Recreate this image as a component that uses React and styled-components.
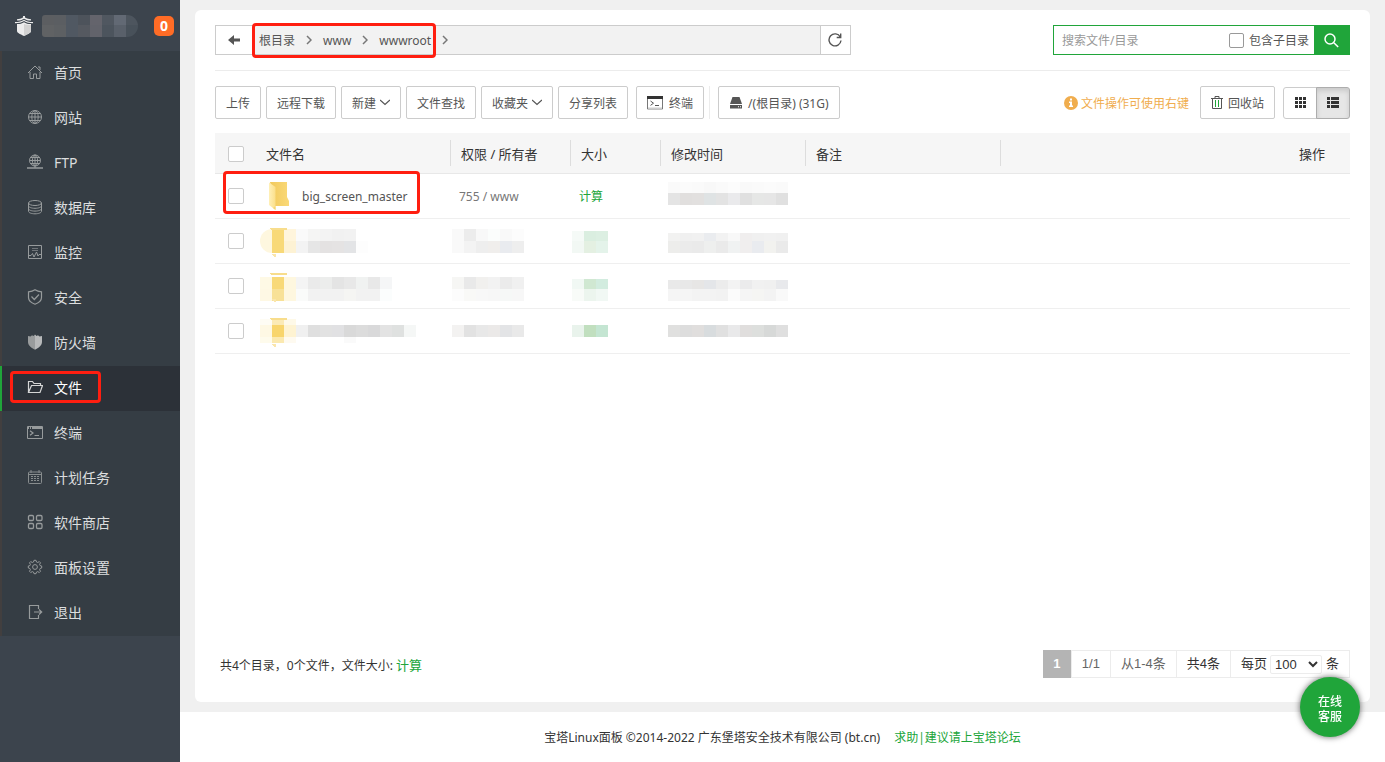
import React from "react";
import styled, { createGlobalStyle } from "styled-components";

const GlobalStyle = createGlobalStyle`
  * {
    box-sizing: border-box;
  }

  body {
    margin: 0;
    background: #fff;
    color: #333;
    font-family: "Noto Sans", "Noto Sans CJK SC", sans-serif;
    font-size: 12px;
  }

  button,
  input,
  select {
    font: inherit;
    color: inherit;
  }

  a {
    color: inherit;
    text-decoration: none;
  }

  svg {
    display: block;
    flex: none;
  }
`;

const Page = styled.div`
  display: flex;
  min-height: 100vh;
`;

const Sidebar = styled.aside`
  width: 180px;
  flex: none;
  background: #3c444d;
`;

const SidebarTop = styled.div`
  display: flex;
  align-items: center;
  height: 51px;
  padding: 0 6px 0 15px;
`;

const ServerName = styled.div`
  margin: 0 auto 0 9px;
  border-radius: 3px 11px 11px 3px;
  overflow: hidden;
`;

const Badge = styled.span`
  width: 20px;
  height: 20px;
  border-radius: 5px;
  background: #ff6c26;
  color: #fff;
  font-size: 14px;
  font-weight: bold;
  line-height: 20px;
  text-align: center;
`;

const Menu = styled.nav`
  display: flex;
  flex-direction: column;
  background: #353d44;
`;

const MenuLink = styled.a`
  position: relative;
  display: flex;
  align-items: center;
  gap: 11px;
  height: 45px;
  padding: 0 0 3px 25px;
  border-left: 2px solid ${({ $active }) => ($active ? "#20a53a" : "#423f3f")};
  background: ${({ $active }) => ($active ? "#2c3138" : "transparent")};
  color: ${({ $active }) => ($active ? "#fff" : "#dcdedf")};
  font-size: 14px;

  svg {
    color: ${({ $active }) => ($active ? "#d5d5d5" : "#979b9c")};
  }
`;

const Highlight = styled.span`
  position: absolute;
  border: 3px solid #ff1e10;
  border-radius: 4px;
  pointer-events: none;
`;

const MenuHighlight = styled(Highlight)`
  inset: 5px 79px 8px 8px;
`;

const PathHighlight = styled(Highlight)`
  inset: -3px -5px -4px -7px;
`;

const RowHighlight = styled(Highlight)`
  left: 8px;
  top: -3px;
  width: 197px;
  height: 43px;
`;

const Main = styled.main`
  display: flex;
  flex: 1;
  flex-direction: column;
  min-width: 0;
`;

const Content = styled.div`
  display: flex;
  flex: 1;
  padding: 10px 15px;
  background: #f0f0f0;
`;

const Card = styled.section`
  display: flex;
  flex: 1;
  flex-direction: column;
  min-width: 0;
  padding: 15px 20px 24px;
  border-radius: 6px;
  background: #fff;
`;

const TopBar = styled.div`
  display: flex;
  justify-content: space-between;
  padding-bottom: 15px;
  border-bottom: 1px solid #ececec;
`;

const PathBar = styled.div`
  display: flex;
  width: 56%;
  height: 30px;
  border: 1px solid #ccc;
  background: #f2f2f2;
`;

const PathButton = styled.button`
  display: flex;
  align-items: center;
  justify-content: center;
  width: ${({ $width }) => $width}px;
  padding: 0;
  border: 0;
  background: #fff;
  color: #555;
  cursor: pointer;
`;

const RefreshButton = styled(PathButton)`
  margin-left: auto;
  border-left: 1px solid #ccc;
`;

const Crumbs = styled.div`
  position: relative;
  display: flex;
  align-items: center;
  gap: 11px;
  margin: 0 11px 0 7px;
  color: #555;

  svg {
    color: #777;
  }
`;

const TrailChevron = styled.span`
  display: flex;
  align-items: center;
  color: #777;
`;

const Search = styled.form`
  display: flex;
  width: 297px;
  height: 30px;
  border: 1px solid #20a53a;
`;

const SearchInput = styled.input`
  flex: 1;
  min-width: 0;
  padding: 0 8px;
  border: 0;
  outline: none;

  &::placeholder {
    color: #999;
  }
`;

const CheckLabel = styled.label`
  display: flex;
  align-items: center;
  gap: 5px;
  margin-right: 5px;
  color: #555;
`;

const Checkbox = styled.input.attrs({ type: "checkbox" })`
  appearance: none;
  display: block;
  width: ${({ $size }) => $size || 16}px;
  height: ${({ $size }) => $size || 16}px;
  margin: 0;
  border: 1px solid ${({ $dark }) => ($dark ? "#999" : "#ccc")};
  border-radius: 2px;
  background: #fff;
`;

const SearchButton = styled.button`
  display: flex;
  align-items: center;
  justify-content: center;
  width: 35px;
  padding: 0;
  border: 0;
  background: #20a53a;
  color: #fff;
`;

const Toolbar = styled.div`
  display: flex;
  align-items: center;
  gap: 5px;
  padding: 15px 0 14px;
`;

const ToolButton = styled.button`
  display: flex;
  align-items: center;
  gap: ${({ $gap }) => $gap || 4}px;
  height: 33px;
  padding: 0 10px;
  border: 1px solid #ccc;
  border-radius: 2px;
  background: #fff;
  color: #555;
  white-space: nowrap;
  cursor: pointer;
`;

const ToolGroup = styled.div`
  display: flex;
  padding-left: ${({ $line }) => ($line ? 8 : 3)}px;
  border-left: ${({ $line }) => ($line ? "1px solid #ececec" : "0")};
`;

const Tip = styled.span`
  display: flex;
  align-items: center;
  gap: 3px;
  margin: 0 6px 0 auto;
  color: #f0ad4e;
`;

const ViewToggle = styled.div`
  display: flex;
  margin-left: 3px;
`;

const ViewButton = styled.button`
  display: flex;
  align-items: center;
  justify-content: center;
  width: 34px;
  height: 32px;
  padding: 0;
  border: 1px solid ${({ $active }) => ($active ? "#adadad" : "#ccc")};
  border-radius: ${({ $active }) => ($active ? "0 3px 3px 0" : "3px 0 0 3px")};
  background: ${({ $active }) => ($active ? "#e6e6e6" : "#fff")};
  box-shadow: ${({ $active }) => ($active ? "inset 0 3px 5px rgba(0, 0, 0, 0.125)" : "none")};
  color: #333;

  & + & {
    margin-left: -1px;
  }
`;

const Table = styled.table`
  width: 100%;
  table-layout: fixed;
  border-collapse: separate;
  border-spacing: 0;
`;

const HeadCell = styled.th`
  height: 41px;
  padding: 1px 10px 0;
  border-bottom: 1px solid #e8e8e8;
  background: ${({ $line }) =>
      $line ? "linear-gradient(#ddd, #ddd) right center / 1px 26px no-repeat," : ""}
    #f6f6f6;
  font-size: 13px;
  font-weight: normal;
  text-align: ${({ $right }) => ($right ? "right" : "left")};

  &:last-child {
    padding-right: 25px;
  }
`;

const CheckCell = styled(HeadCell)`
  padding: 2px 0 0 13px;
`;

const Row = styled.tr`
  position: relative;

  td {
    height: 45px;
    padding: 0 0 0 8px;
    border-bottom: 1px solid #efefef;
    color: #777;
  }

  td:first-child {
    padding-left: 13px;
  }

  td:nth-child(2) {
    padding-left: 4px;
  }

  td:nth-child(5) {
    padding-left: 7px;
  }
`;

const FileName = styled.a`
  display: flex;
  align-items: center;
  gap: 12px;
  padding-left: 8px;
  color: #555;
`;

const GreenLink = styled.a`
  color: #20a53a;
  font-size: ${({ $large }) => ($large ? 13 : 12)}px;
`;

const Blur = styled.svg`
  margin-left: ${({ $bleed }) => ($bleed ? -7 : 0)}px;
`;

const CardFooter = styled.div`
  display: flex;
  align-items: center;
  justify-content: space-between;
  margin-top: auto;
  padding-left: 5px;
`;

const Pager = styled.div`
  display: flex;
  height: 28px;
  border: 1px solid #ececec;
  font-family: "Liberation Sans", "Noto Sans CJK SC", sans-serif;
  font-size: 13px;
  line-height: 26px;
`;

const PageItem = styled.span`
  display: flex;
  align-items: center;
  gap: 4px;
  padding: 0 10px;
  border-left: 1px solid #ececec;
  color: ${({ $muted }) => ($muted ? "#666" : "#333")};
`;

const CurrentPage = styled.span`
  width: 28px;
  margin: -1px 0 -1px -1px;
  background: #b4b4b4;
  color: #fff;
  font-weight: bold;
  line-height: 28px;
  text-align: center;
`;

const PageSize = styled.select`
  width: 52px;
  height: 19px;
  padding: 0;
  border: 1px solid #ececec;
  border-radius: 2px;
  background: #fff;
`;

const SizeLabel = styled.label`
  display: flex;
  align-items: center;
  gap: 3px;
`;

const Footer = styled.footer`
  display: flex;
  align-items: center;
  justify-content: center;
  gap: 14px;
  height: 50px;
  background: #fff;
`;

const ServiceButton = styled.button`
  position: fixed;
  right: 25px;
  bottom: 25px;
  width: 60px;
  height: 60px;
  padding: 4px 16px 0;
  border: 0;
  border-radius: 50%;
  background: #20a53a;
  box-shadow: 0 0 6px rgba(0, 0, 0, 0.6);
  color: #fff;
  font-weight: 500;
  line-height: 15px;
`;

const line = {
  fill: "none",
  stroke: "currentColor",
  strokeWidth: 1,
};

const menuItems = [
  {
    name: "首页",
    icon: (
      <g {...line}>
        <path d="M1 9 8 2l7 7M3 8v6.500h3.500V10h3v4.500H13V8M11 3h2v3" />
      </g>
    ),
  },
  {
    name: "网站",
    icon: (
      <g {...line}>
        <circle cx="8" cy="8" r="6.500" />
        <ellipse cx="8" cy="8" rx="3.200" ry="6.500" />
        <path d="M8 1.500v13M1.500 8h13M2.500 4.500h11M2.500 11.500h11" />
      </g>
    ),
  },
  {
    name: "FTP",
    icon: (
      <g {...line}>
        <circle cx="8" cy="6.500" r="5.500" />
        <ellipse cx="8" cy="6.500" rx="2.600" ry="5.500" />
        <path d="M8 1v13M2.500 6.500h11M3.500 3.500h9M3.500 9.500h9" />
        <path d="M0 14h16M6 14h4" strokeWidth="1.500" />
      </g>
    ),
  },
  {
    name: "数据库",
    icon: (
      <g {...line}>
        <ellipse cx="8" cy="4" rx="6.500" ry="2.500" />
        <path d="M1.500 4v8.300c0 1.400 2.900 2.500 6.500 2.500s6.500-1.100 6.500-2.500V4M1.500 6.800c0 1.400 2.900 2.500 6.500 2.500s6.500-1.100 6.500-2.500M1.500 9.600c0 1.400 2.900 2.500 6.500 2.500s6.500-1.100 6.500-2.500" />
      </g>
    ),
  },
  {
    name: "监控",
    icon: (
      <g {...line}>
        <path d="M1.500 1.500h13v13h-13z" />
        <path d="M5 4.500h6M5 6.500h6" opacity="0.6" />
        <path d="M2 11.500h2l1.500-2 1.500 3.500L9.500 8l1.500 4 1-1.500h2" />
      </g>
    ),
  },
  {
    name: "安全",
    icon: (
      <g {...line} strokeWidth="1.200">
        <path d="M8 .8c2 1.400 4.200 1.900 6.500 2v5.700c0 3-2.500 5.200-6.500 6.700-4-1.500-6.500-3.700-6.500-6.700V2.800C3.800 2.700 6 2.200 8 .8z" />
        <path d="m4.500 7.500 2.800 3L12 5.500" />
      </g>
    ),
  },
  {
    name: "防火墙",
    icon: (
      <g>
        <path
          d="M8 .5 9.500 2l1.500-.8L12.500 2.500 15 2v6c0 3.500-3.500 6-7 7.800z"
          fill="#b7b9ba"
        />
        <path d="M8 .5 6.500 2 5 1.200 3.500 2.500 1 2v6c0 3.500 3.500 6 7 7.800z" fill="#999c9d" />
      </g>
    ),
  },
  {
    name: "文件",
    active: true,
    icon: (
      <g {...line} strokeWidth="1.200">
        <path d="M1.500 13.500v-11h4l1.500 2h6.500v2M1.500 13.500l3-7h11l-2.500 7z" />
      </g>
    ),
  },
  {
    name: "终端",
    icon: (
      <g {...line}>
        <path d="M.5 2.500h15v12H.5z" />
        <path d="M5 4h10" strokeWidth="2" />
        <path d="M1 4h1M3 4h1" strokeWidth="2" />
        <path d="m3 6.800 3 2.200-3 2.200M7.500 11.500H12" strokeWidth="1.200" />
      </g>
    ),
  },
  {
    name: "计划任务",
    icon: (
      <g {...line} opacity="0.85">
        <rect x="1.500" y="3" width="13" height="11.500" rx="1" />
        <path d="M4 1v3M12 1v3M2 5.500h12" />
        <path d="M4 7.500h8M4 9.500h8M4 11.500h8" strokeDasharray="2 1" />
      </g>
    ),
  },
  {
    name: "软件商店",
    icon: (
      <g {...line} strokeWidth="1.300">
        <rect x="1.500" y="1.500" width="5" height="5" rx="1.200" />
        <rect x="9.500" y="1.500" width="5.500" height="5" rx="1.200" />
        <rect x="1.500" y="9.500" width="5" height="5" rx="1.200" />
        <rect x="9.500" y="9.500" width="5.500" height="5" rx="1.200" />
      </g>
    ),
  },
  {
    name: "面板设置",
    icon: (
      <g {...line}>
        <path d="m6.500 3 .5-1.700h2L9.500 3l1.200.5 1.600-.9 1.200 1.200-.9 1.600.5 1.200 1.600.4v2l-1.600.5-.5 1.200.9 1.600-1.200 1.200-1.600-.9-1.200.5L9 14.700H7l-.5-1.600-1.200-.5-1.600.9-1.200-1.200.9-1.600L2.900 9.500 1.300 9V7l1.600-.4.5-1.200-.9-1.600 1.200-1.200 1.600.9z" />
        <circle cx="8" cy="8" r="2.400" />
      </g>
    ),
  },
  {
    name: "退出",
    icon: (
      <g {...line} strokeWidth="1.200">
        <path d="M11.500 5V1.500h-9v13h9V11M7 8h7.500M12 5.500 14.700 8 12 10.500" />
      </g>
    ),
  },
];

const columns = [41, 195, 120, 90, 145, 195];

// Each band is [top, height, first column colour, next column colour, ...]
const nameBlur = [
  [
    [10, 12, "none", "#f8d978", "#fff5dc", "#fafafa", "#f5f5f4", "#f3f3f3", "#f1f1f1", "#f2f2f2"],
    [22, 12, "none", "#f8d978", "#fdf2d4", "#f3f3f3", "#e6e6e6", "#e4e2e2", "#e5e3e3", "#e3e4e6", "#fdfdfd"],
  ],
  [
    [13, 12, "#fef9e5", "#f8d978", "#fef7df", "#f4f4f4", "#eaeaea", "#ecedec", "#e4e4e4", "#e8e8e8", "#f0f2f1", "#e8e8e8", "#f5f6f7"],
    [25, 12, "#fef8e4", "#f8e197", "#fef7df", "#fafbfa", "#f2f2f2", "#f2f2f2", "#f2f2f2", "#f5f5f3", "#f2f2f2", "#f2f2f2", "#fbfdfd"],
  ],
  [
    [10, 6, "#fefcf4", "#fbeab6", "#fef9e8"],
    [16, 12, "#fef8e4", "#f8d56d", "#fef3d2", "#f0f0f0", "#dfdfdf", "#e2e2e2", "#e1e1e3", "#d9d9d9", "#dcdcdc", "#d9d9da", "#e3e3e3", "#dfe1e0", "#f5f7f6"],
    [28, 6, "#fefbec", "#fbe9b0", "#fefaf0", "#fff", "#fff", "#fff", "#fff", "#fafafa"],
  ],
];

const ownerBlur = [
  [
    [10, 12, "#f9f9f9", "#ececec", "#f8f8f8", "#fbfdfc", "#f9f9f9", "#fcfcfc"],
    [22, 12, "#f9f9f9", "#f3f3f3", "#eeeeee", "#f0eeec", "#e9ebef", "#eeeeee"],
  ],
  [
    [13, 12, "#f6f6f4", "#e9e9e9", "#f1f0ee", "#f2f2f2", "#ebebeb", "#f0f0f0"],
    [25, 12, "#fcfcfc", "#f9f9f7", "#f8f8f8", "#f7f7f7", "#f6f8f7", "#f7f7f7"],
  ],
  [[16, 12, "#f3f2f1", "#e2e2e2", "#e8e8e8", "#ebe9e8", "#e3e4e6", "#e9e9e9"]],
];

const sizeBlur = [
  [
    [12, 10, "#f5faf7", "#daeee0", "#dcefe2"],
    [22, 12, "#f2f8f4", "#e4f0e2", "#e4f3ea"],
  ],
  [
    [15, 10, "#f1f8f4", "#d0e8d2", "#d2ecdf"],
    [25, 12, "#f8fbf8", "#ecf5ee", "#f1f8f4"],
  ],
  [[16, 12, "#e9f3ec", "#c1dfbf", "#c4e5d2"]],
];

const timeBlur = [
  [
    [8, 11, "#fafafa", "#fbfbfb", "#fafafa", "#f8f8f8", "#fafafa", "#fcfcfc", "#f9f9f9", "#fafafa", "#fbfbfb", "#fafafa"],
    [19, 12, "#e4e4e4", "#e1dfde", "#e2e0df", "#dfe3e4", "#e3e3e3", "#eaeaec", "#e0e0e0", "#e6e7e6", "#e6e6e6", "#e0e0e0"],
  ],
  [
    [14, 8, "#f2f2f1", "#f0f0f0", "#f1f1f1", "#eaecef", "#f2f2f2", "#f8f8f8", "#f0eeee", "#f0f0f0", "#f1f1f1", "#f0f0f0"],
    [22, 12, "#ededeb", "#ebebeb", "#eaeaea", "#eeefee", "#eaeaea", "#f0f2f2", "#f0eeee", "#e9ebef", "#f2f2ef", "#eaeaea"],
  ],
  [
    [16, 9, "#e9e9e9", "#e8e8e8", "#e7e6e5", "#e4e6e9", "#ececec", "#f3f3f3", "#ebebec", "#f1f1f1", "#f0f0f0", "#e8e9ec"],
    [25, 12, "#f5f5f5", "#f5f5f5", "#f3f3f3", "#f3f3f3", "#f2f2f2", "#fbfbfb", "#f5f5f5", "#f5f5f3", "#f3f3f3", "#f9f9f9"],
  ],
  [[16, 12, "#e0e0df", "#dddddd", "#e0dedd", "#d8dcde", "#e0e0e0", "#e9e9ea", "#e0dedd", "#dddfdd", "#d7d9d8", "#dfdfdf"]],
];

const Mosaic = ({ bands, bleed, height = 44, children }) => {
  const count = Math.max(...bands.map((band) => band.length - 2));
  return (
    <Blur
      width={count * 12}
      height={height}
      $bleed={bleed}
      shapeRendering="crispEdges"
      aria-hidden="true"
    >
      {bands.map(([top, bandHeight, ...cells]) =>
        cells.map((fill, i) => (
          <rect key={`${top}-${i}`} x={i * 12} y={top} width="12" height={bandHeight} fill={fill} />
        ))
      )}
      {children}
    </Blur>
  );
};

const Chevron = () => (
  <svg width="6" height="10" viewBox="0 0 6 10" {...line} strokeWidth="1.500">
    <path d="m1 1 4 4-4 4" />
  </svg>
);

const Caret = () => (
  <svg width="10" height="7" viewBox="0 0 10 7" {...line} strokeWidth="1.300">
    <path d="m0 1 5 4.500L10 1" />
  </svg>
);

const FolderIcon = () => (
  <svg width="22" height="30" viewBox="0 0 22 30" aria-hidden="true">
    <defs>
      <linearGradient id="folderBack" x1="0" x2="1">
        <stop offset="0" stopColor="#f1c95c" />
        <stop offset="1" stopColor="#fad978" />
      </linearGradient>
      <linearGradient id="folderFront" x1="0" x2="1">
        <stop offset="0" stopColor="#fff0b8" />
        <stop offset="1" stopColor="#fbdf8a" />
      </linearGradient>
    </defs>
    <path d="M2 1h17v15l2 4v5H7z" fill="url(#folderBack)" />
    <path d="M1 1.500 7.500 6v23L1 24z" fill="url(#folderFront)" />
    <path d="M7.500 25v4L5 27z" fill="#f5d575" />
  </svg>
);

const Logo = () => (
  <svg width="18" height="20" viewBox="0 0 18 20" fill="#ececec" aria-hidden="true">
    <path d="M8 0h2v1.500C12 2.800 14 3.200 16 3.200V4.500C13 4.500 11 4 9 2.700 7 4 5 4.500 2 4.500V3.200c2 0 4-.4 6-1.700z" />
    <path d="M0 6c4 0 6.500-.7 9-2.300C11.500 5.300 14 6 18 6v1.300c-4 0-6.500-.8-9-2.200C6.500 6.500 4 7.300 0 7.300z" />
    <path d="M2 8c3 0 5-.5 7-1.800C11 7.500 13 8 16 8v7c0 2-4 3.500-7 5-3-1.500-7-3-7-5z" />
    <path d="M9 8v12c3-1.500 7-3 7-5V9c-3 0-5-.2-7-1z" fill="#d2d2d2" />
  </svg>
);

const App = () => {
  return (
    <Page>
      <GlobalStyle />
      <Sidebar>
        <SidebarTop>
          <Logo />
          <ServerName>
            <Mosaic
              height={22}
              bands={[
                [0, 10, "#5c5e61", "#5b5e62", "#505862", "#4d535b", "#64646c", "#505760", "#626974", "#4d555e"],
                [10, 12, "#606264", "#5d6063", "#505862", "#555960", "#62636b", "#4c545d", "#59606a", "#48515a"],
              ]}
            />
          </ServerName>
          <Badge>0</Badge>
        </SidebarTop>
        <Menu>
          {menuItems.map((item) => (
            <MenuLink key={item.name} href="#" $active={item.active}>
              <svg width="16" height="16" viewBox="0 0 16 16" aria-hidden="true">
                {item.icon}
              </svg>
              {item.name}
              {item.active && <MenuHighlight />}
            </MenuLink>
          ))}
        </Menu>
      </Sidebar>

      <Main>
        <Content>
          <Card>
            <TopBar>
              <PathBar>
                <PathButton type="button" $width={36} aria-label="Back">
                  <svg width="12" height="10" viewBox="0 0 12 10" fill="currentColor">
                    <path d="M0 5 6 0v3.500h6v3H6V10z" />
                  </svg>
                </PathButton>
                <Crumbs>
                  <a href="#">根目录</a>
                  <Chevron />
                  <a href="#">www</a>
                  <Chevron />
                  <a href="#">wwwroot</a>
                  <PathHighlight />
                </Crumbs>
                <TrailChevron>
                  <Chevron />
                </TrailChevron>
                <RefreshButton type="button" $width={30} aria-label="Refresh">
                  <svg width="14" height="14" viewBox="0 0 14 14" {...line} strokeWidth="1.400">
                    <path d="M12.300 4A6 6 0 1 0 13 7.500M12.700.5v4H8.700" />
                  </svg>
                </RefreshButton>
              </PathBar>
              <Search>
                <SearchInput placeholder="搜索文件/目录" aria-label="搜索文件/目录" />
                <CheckLabel>
                  <Checkbox $size={15} $dark />
                  包含子目录
                </CheckLabel>
                <SearchButton type="button" aria-label="Search">
                  <svg width="15" height="15" viewBox="0 0 15 15" {...line} strokeWidth="1.500">
                    <circle cx="6" cy="6" r="5" />
                    <path d="m9.800 9.800 4.400 4.200" />
                  </svg>
                </SearchButton>
              </Search>
            </TopBar>

            <Toolbar>
              <ToolButton>上传</ToolButton>
              <ToolButton>远程下载</ToolButton>
              <ToolButton>
                新建
                <Caret />
              </ToolButton>
              <ToolButton>文件查找</ToolButton>
              <ToolButton>
                收藏夹
                <Caret />
              </ToolButton>
              <ToolButton>分享列表</ToolButton>
              <ToolGroup>
                <ToolButton $gap={6}>
                  <svg width="16" height="14" viewBox="0 0 16 14" {...line}>
                    <path d="M.5.5h15v12.500H.5z" stroke="#777" />
                    <path d="M0 1.500h16" stroke="#333" strokeWidth="3" />
                    <path d="M1 12.500h14" stroke="#ccc" strokeWidth="2" />
                    <path d="m3.500 5 3 2.200-3 2.200M8 9.500h4" />
                  </svg>
                  终端
                </ToolButton>
              </ToolGroup>
              <ToolGroup $line>
                <ToolButton $gap={5}>
                  <svg width="14" height="12" viewBox="0 0 14 12" fill="currentColor">
                    <path d="M3.500 0h7L13 7H1z" />
                    <path d="M1 8h12v3.500H1zm8 1.300v1h1v-1zm2 0v1h1v-1z" fillRule="evenodd" />
                  </svg>
                  /(根目录) (31G)
                </ToolButton>
              </ToolGroup>
              <Tip>
                <svg width="14" height="14" viewBox="0 0 14 14">
                  <circle cx="7" cy="7" r="7" fill="currentColor" />
                  <path d="M6 2.500h2v2H6zM5 5.500h3v4h1V11H5V9.500h1V7H5z" fill="#fff" />
                </svg>
                文件操作可使用右键
              </Tip>
              <ToolButton $gap={5}>
                <svg width="12" height="13" viewBox="0 0 12 13" {...line}>
                  <path d="M0 2.500h12M4 2.500v-2h4v2M1.500 2.500v10h9v-10" />
                  <path d="M4.500 4v7M7.500 4v7" stroke="#20a53a" />
                </svg>
                回收站
              </ToolButton>
              <ViewToggle>
                <ViewButton aria-label="Grid view">
                  <svg width="11" height="11" viewBox="0 0 11 11" fill="currentColor">
                    <path d="M0 0h3v3H0zM4 0h3v3H4zM8 0h3v3H8zM0 4h3v3H0zM4 4h3v3H4zM8 4h3v3H8zM0 8h3v3H0zM4 8h3v3H4zM8 8h3v3H8z" />
                  </svg>
                </ViewButton>
                <ViewButton $active aria-label="List view">
                  <svg width="12" height="11" viewBox="0 0 12 11" fill="currentColor">
                    <path d="M0 0h3v3H0zM4 0h8v3H4zM0 4h3v3H0zM4 4h8v3H4zM0 8h3v3H0zM4 8h8v3H4z" />
                  </svg>
                </ViewButton>
              </ViewToggle>
            </Toolbar>

            <Table>
              <colgroup>
                {columns.map((width, i) => (
                  <col key={i} width={width} />
                ))}
                <col />
              </colgroup>
              <thead>
                <tr>
                  <CheckCell>
                    <Checkbox aria-label="Select all" />
                  </CheckCell>
                  <HeadCell $line>文件名</HeadCell>
                  <HeadCell $line>权限 / 所有者</HeadCell>
                  <HeadCell $line>大小</HeadCell>
                  <HeadCell $line>修改时间</HeadCell>
                  <HeadCell $line>备注</HeadCell>
                  <HeadCell $right>操作</HeadCell>
                </tr>
              </thead>
              <tbody>
                <Row>
                  <td>
                    <Checkbox aria-label="big_screen_master" />
                    <RowHighlight />
                  </td>
                  <td>
                    <FileName href="#">
                      <FolderIcon />
                      big_screen_master
                    </FileName>
                  </td>
                  <td>755 / www</td>
                  <td>
                    <GreenLink href="#">计算</GreenLink>
                  </td>
                  <td>
                    <Mosaic bands={timeBlur[0]} />
                  </td>
                  <td />
                  <td />
                </Row>
                {nameBlur.map((bands, i) => (
                  <Row key={i}>
                    <td>
                      <Checkbox aria-label={`Row ${i + 2}`} />
                    </td>
                    <td>
                      <Mosaic bands={bands}>
                        {i === 0 && (
                          <path
                            d="M12 10a12 12 0 0 0 0 24z"
                            fill="#fef7df"
                            shapeRendering="auto"
                          />
                        )}
                        <path d="M9 9h18v2H11z" fill="#f8dd8c" />
                        <path d="M12 35h4v3h-2z" fill="#fae6ac" />
                      </Mosaic>
                    </td>
                    <td>
                      <Mosaic bands={ownerBlur[i]} bleed />
                    </td>
                    <td>
                      <Mosaic bands={sizeBlur[i]} bleed />
                    </td>
                    <td>
                      <Mosaic bands={timeBlur[i + 1]} />
                    </td>
                    <td />
                    <td />
                  </Row>
                ))}
              </tbody>
            </Table>

            <CardFooter>
              <div>
                共4个目录，0个文件，文件大小:{" "}
                <GreenLink href="#" $large>
                  计算
                </GreenLink>
              </div>
              <Pager>
                <CurrentPage>1</CurrentPage>
                <PageItem $muted>1/1</PageItem>
                <PageItem $muted>从1-4条</PageItem>
                <PageItem>共4条</PageItem>
                <PageItem>
                  <SizeLabel>
                    每页
                    <PageSize defaultValue="100">
                      <option>100</option>
                      <option>200</option>
                    </PageSize>
                  </SizeLabel>
                  条
                </PageItem>
              </Pager>
            </CardFooter>
          </Card>
        </Content>
        <Footer>
          <span>宝塔Linux面板 ©2014-2022 广东堡塔安全技术有限公司 (bt.cn)</span>
          <GreenLink href="#">求助|建议请上宝塔论坛</GreenLink>
        </Footer>
      </Main>
      <ServiceButton>在线客服</ServiceButton>
    </Page>
  );
};

export default App;
